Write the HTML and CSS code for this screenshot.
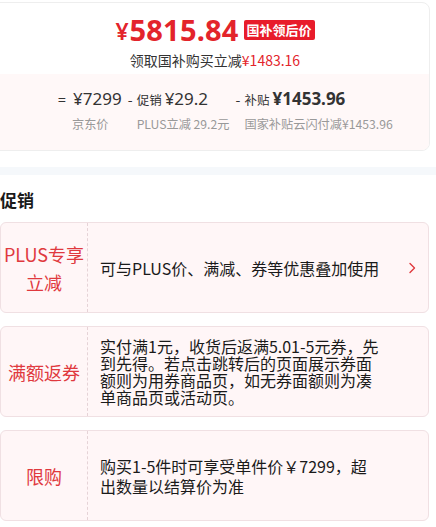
FILE: index.html
```html
<!DOCTYPE html>
<html lang="zh-CN">
<head>
    <meta charset="UTF-8">
    <meta name="viewport" content="width=device-width, initial-scale=1.0">
    <title>促销</title>
    <link rel="stylesheet" href="styles.css">
</head>
<body>

    <div class="price-card">
        <!-- Final price -->
        <div class="price-top">
            <div class="price-main">
                <span class="yen">¥</span><span class="amount">5815.84</span>
                <span class="badge">国补领后价</span>
            </div>
            <div class="price-sub">领取国补购买立减<span class="red">¥1483.16</span></div>
        </div>

        <!-- Price breakdown -->
        <div class="price-detail">
            <div class="part first">
                <div class="part-value"><span class="sign">=</span><span class="num">¥7299</span></div>
                <div class="part-label">京东价</div>
            </div>
            <div class="part">
                <div class="part-value"><span class="sign">-</span><span class="tag">促销</span><span class="num">¥29.2</span></div>
                <div class="part-label">PLUS立减 29.2元</div>
            </div>
            <div class="part">
                <div class="part-value"><span class="sign">-</span><span class="tag">补贴</span><span class="num bold">¥1453.96</span></div>
                <div class="part-label">国家补贴云闪付减¥1453.96</div>
            </div>
        </div>
    </div>

    <div class="divider"></div>

    <h2 class="section-title">促销</h2>

    <div class="promo">
        <div class="promo-name">PLUS专享<br>立减</div>
        <div class="promo-text">可与PLUS价、满减、券等优惠叠加使用</div>
        <svg class="promo-arrow" width="8" height="12" viewBox="0 0 8 12">
            <path d="M2 1.5 L6.5 6 L2 10.5" fill="none" stroke="#e0393e" stroke-width="1.4" stroke-linecap="round" stroke-linejoin="round"/>
        </svg>
    </div>

    <div class="promo">
        <div class="promo-name">满额返券</div>
        <div class="promo-text tight">实付满1元，收货后返满5.01-5元券，先<br>到先得。若点击跳转后的页面展示券面<br>额则为用券商品页，如无券面额则为凑<br>单商品页或活动页。</div>
    </div>

    <div class="promo">
        <div class="promo-name">限购</div>
        <div class="promo-text">购买1-5件时可享受单件价￥7299，超<br>出数量以结算价为准</div>
    </div>

</body>
</html>
```

FILE: styles.css
```css
body {
    margin: 0;
    padding-top: 2px;
    font-family: "Noto Sans CJK SC", "Noto Sans", sans-serif;
    color: #1a1a1a;
    background: #fff;
    width: 436px;
    overflow: hidden;
}
.red {
    color: #e3242b;
}
.price-card {
    margin-left: -8px;
    width: 436px;
    border: 1px solid #eee;
    border-radius: 8px;
    overflow: hidden;
}
.price-top {
    height: 71px;
    display: flex;
    flex-direction: column;
    align-items: center;
    padding: 4px 0 0 8px;
    box-sizing: border-box;
}
.price-main {
    display: flex;
    align-items: center;
    height: 44px;
    color: #e3242b;
    font-family: "Noto Sans", "Noto Sans CJK SC", sans-serif;
}
.yen {
    font-size: 23px;
    font-weight: 600;
    margin-top: 3px;
    margin-right: 1px;
}
.amount {
    font-size: 29px;
    font-weight: 700;
    letter-spacing: 0.2px;
}
.badge {
    margin-left: 5px;
    margin-top: 2px;
    background: #e81c2b;
    color: #fff;
    font-family: "Noto Sans CJK SC", sans-serif;
    font-size: 13px;
    font-weight: 700;
    line-height: 20px;
    padding: 0 3px;
    border-radius: 2px;
}
.price-sub {
    font-size: 14px;
    line-height: 18px;
    color: #333;
}
.price-detail {
    background: #fff8f8;
    height: 76px;
    display: flex;
    gap: 6px;
    padding: 13px 0 0 65px;
    box-sizing: border-box;
}
.part-value {
    display: flex;
    align-items: baseline;
    color: #333;
    height: 24px;
}
.sign {
    width: 9px;
    font-size: 14px;
}
.first .sign {
    width: 15px;
}
.tag {
    font-size: 12.5px;
    margin-right: 3px;
}
.num {
    font-family: "Noto Sans", "Noto Sans CJK SC", sans-serif;
    font-size: 17px;
}
.num.bold {
    font-weight: 700;
}
.part-label {
    padding-left: 9px;
    margin-top: 2px;
    font-size: 12.2px;
    color: #999;
    line-height: 22px;
}
.first .part-label {
    padding-left: 14px;
}
.divider {
    margin-top: 16px;
    height: 8px;
    background: #f5f8fb;
}
.section-title {
    margin: 14px 0 11px;
    font-size: 17px;
    font-weight: 700;
    line-height: 22px;
    color: #1a1a1a;
}
.promo {
    position: relative;
    display: flex;
    align-items: center;
    width: 429px;
    height: 91px;
    box-sizing: border-box;
    margin-bottom: 13px;
    background: #fff6f7;
    border: 1px solid #f0e0e3;
    border-radius: 6px;
}
.promo-name {
    width: 86px;
    flex-shrink: 0;
    align-self: stretch;
    display: flex;
    align-items: center;
    justify-content: center;
    text-align: center;
    border-right: 1px dashed #e6d3d7;
    color: #e0393e;
    font-size: 18px;
    line-height: 28px;
}
.promo-text {
    padding-left: 12px;
    font-size: 16px;
    line-height: 20px;
    color: #1a1a1a;
    white-space: nowrap;
}
.promo-text.tight {
    line-height: 17px;
}
.promo-arrow {
    position: absolute;
    right: 12px;
    top: 39px;
}
```
